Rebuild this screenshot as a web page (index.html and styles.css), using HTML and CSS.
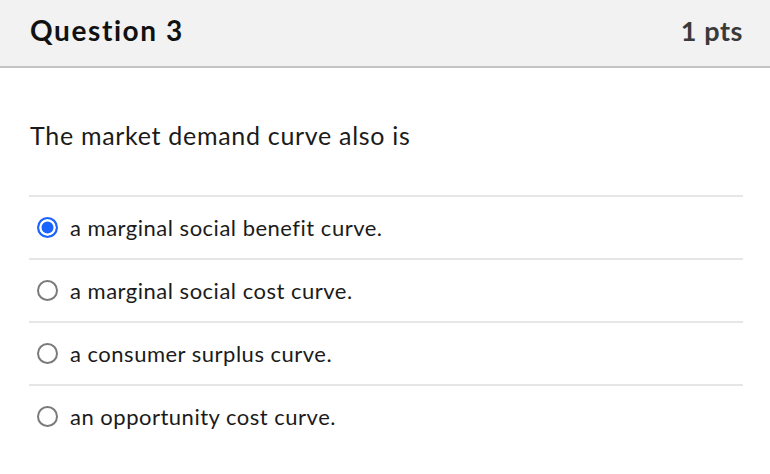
FILE: index.html
```html
<!DOCTYPE html>
<html>
<head>
<meta charset="utf-8">
<link rel="stylesheet" href="styles.css">
</head>
<body>
<div class="quiz">
  <div class="header">
    <div class="title">Question 3</div>
    <div class="pts">1 pts</div>
  </div>
  <div class="body">
    <div class="question">The market demand curve also is</div>
    <div class="answers">
      <div class="answer"><span class="radio checked"></span><span class="label">a marginal social benefit curve.</span></div>
      <div class="answer"><span class="radio"></span><span class="label">a marginal social cost curve.</span></div>
      <div class="answer"><span class="radio"></span><span class="label">a consumer surplus curve.</span></div>
      <div class="answer"><span class="radio"></span><span class="label">an opportunity cost curve.</span></div>
    </div>
  </div>
</div>
</body>
</html>
```
FILE: styles.css
```css
html, body {
  margin: 0;
  padding: 0;
  background: #ffffff;
}
body {
  font-family: Lato, "Open Sans", sans-serif;
  color: #1b1b1b;
  width: 770px;
  height: 474px;
  overflow: hidden;
}
.header {
  height: 66px;
  background: #f2f2f2;
  border-bottom: 2px solid #c4c4c4;
  display: flex;
  align-items: center;
  justify-content: space-between;
  padding: 0 28px 0 30px;
  box-sizing: content-box;
}
.title {
  font-size: 28px;
  font-weight: 700;
  letter-spacing: 1.6px;
  color: #111;
  margin-top: -6px;
}
.pts {
  font-size: 27px;
  font-weight: 700;
  letter-spacing: 0.6px;
  color: #3a3a3a;
  margin-top: -6px;
  margin-right: -1px;
}
.body {
  padding: 0 27px 0 29px;
}
.question {
  font-size: 25px;
  letter-spacing: 0.7px;
  padding-top: 52px;
  padding-left: 1px;
  height: 74px;
  box-sizing: border-box;
  line-height: 30px;
}
.answers {
  margin-top: 53px;
}
.answer {
  display: flex;
  align-items: center;
  height: 61px;
  border-top: 2px solid #e6e6e6;
  padding-left: 8px;
  box-sizing: content-box;
}
.radio {
  width: 17px;
  height: 17px;
  border: 2px solid #7a7a7a;
  border-radius: 50%;
  box-sizing: content-box;
  margin-right: 12px;
  flex: none;
}
.radio.checked {
  border-color: #1b63ff;
  background: #1b63ff;
  box-shadow: inset 0 0 0 2.5px #ffffff;
}
.label {
  font-size: 22px;
  letter-spacing: 0.5px;
}
```
